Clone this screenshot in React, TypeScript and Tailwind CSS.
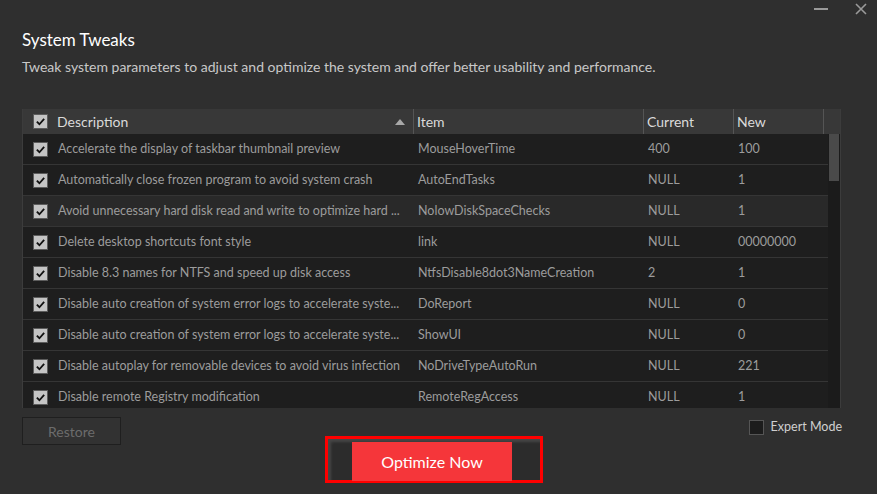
import React from "react";

const rows = [
  { desc: "Accelerate the display of taskbar thumbnail preview", item: "MouseHoverTime", cur: "400", next: "100" },
  { desc: "Automatically close frozen program to avoid system crash", item: "AutoEndTasks", cur: "NULL", next: "1" },
  { desc: "Avoid unnecessary hard disk read and write to optimize hard ...", item: "NolowDiskSpaceChecks", cur: "NULL", next: "1", active: true },
  { desc: "Delete desktop shortcuts font style", item: "link", cur: "NULL", next: "00000000" },
  { desc: "Disable 8.3 names for NTFS and speed up disk access", item: "NtfsDisable8dot3NameCreation", cur: "2", next: "1" },
  { desc: "Disable auto creation of system error logs to accelerate syste...", item: "DoReport", cur: "NULL", next: "0" },
  { desc: "Disable auto creation of system error logs to accelerate syste...", item: "ShowUI", cur: "NULL", next: "0" },
  { desc: "Disable autoplay for removable devices to avoid virus infection", item: "NoDriveTypeAutoRun", cur: "NULL", next: "221" },
  { desc: "Disable remote Registry modification", item: "RemoteRegAccess", cur: "NULL", next: "1" },
];

function Check() {
  return (
    <span className="flex h-[15px] w-[15px] shrink-0 items-center justify-center border border-[#5c5c5c] bg-[#c4c4c4]">
      <svg viewBox="0 0 12 12" className="h-[11px] w-[11px]">
        <path d="M2 6.2 L4.8 9 L10 3.2" fill="none" stroke="#111" strokeWidth="2" />
      </svg>
    </span>
  );
}

export default function App() {
  return (
    <div className="flex h-[494px] w-[877px] flex-col overflow-hidden bg-[#2f2f2f] font-['Lato',sans-serif]">
      {/* window controls */}
      <div className="flex h-[20px] items-start justify-end">
        <span className="mt-[8px] h-[2px] w-[14px] bg-[#9a9a9a]" />
        <svg viewBox="0 0 12 12" className="ml-[27px] mr-[10px] mt-[3px] h-[12px] w-[12px]">
          <path d="M1 1 L11 11 M11 1 L1 11" stroke="#9a9a9a" strokeWidth="1.6" />
        </svg>
      </div>

      <div className="px-[22px]">
        <h1 className="mt-[9px] text-[17px] leading-[22px] text-white">System Tweaks</h1>
        <p className="mt-[7px] text-[14px] leading-[18px] text-[#c8c8c8]">
          Tweak system parameters to adjust and optimize the system and offer better usability and performance.
        </p>

        {/* table */}
        <div className="mt-[33px] flex h-[299px] w-[819px] flex-col border-l border-r border-[#3c3c3c]">
          <div className="flex h-[25px] shrink-0 items-center bg-[#383838] text-[14px] text-[#dadada]">
            <div className="flex h-full w-[391px] items-center border-r border-[#555] pl-[10px]">
              <Check />
              <span className="ml-[9px]">Description</span>
              <svg viewBox="0 0 10 6" className="ml-auto mr-[8px] h-[6px] w-[10px]">
                <path d="M0 6 L5 0 L10 6 Z" fill="#a8a8a8" />
              </svg>
            </div>
            <div className="flex h-full w-[230px] items-center border-r border-[#555] pl-[3px]">Item</div>
            <div className="flex h-full w-[90px] items-center border-r border-[#555] pl-[3px]">Current</div>
            <div className="flex h-full w-[90px] items-center border-r border-[#555] pl-[3px]">New</div>
          </div>
          <div className="flex min-h-0 flex-1">
            <div className="flex-1 overflow-hidden bg-[#1e1e1e]">
              {rows.map((r, i) => (
                <div
                  key={i}
                  className={`flex h-[31px] items-center border-b border-[#353535] text-[12.5px] text-[#9c9c9c] ${
                    r.active ? "bg-[#292929]" : ""
                  }`}
                >
                  <div className="flex w-[391px] items-center overflow-hidden whitespace-nowrap pl-[10px]">
                    <Check />
                    <span className="ml-[10px]">{r.desc}</span>
                  </div>
                  <div className="w-[230px] overflow-hidden whitespace-nowrap pl-[4px]">{r.item}</div>
                  <div className="w-[90px] pl-[4px]">{r.cur}</div>
                  <div className="w-[90px] pl-[4px]">{r.next}</div>
                </div>
              ))}
            </div>
            <div className="w-[12px] shrink-0 bg-[#1b1b1b] pl-[1px] pr-[1px]">
              <div className="h-[47px] bg-[#4a4a4a]" />
            </div>
          </div>
        </div>

        {/* bottom controls */}
        <div className="flex items-start">
          <button className="mt-[9px] h-[28px] w-[99px] border border-[#1f1f1f] bg-[#323232] text-[14px] text-[#6c6c6c]">
            Restore
          </button>
          <div className="ml-[204px] mt-[28px] flex h-[47px] w-[218px] border-[3px] border-[#ff0000] bg-[#2c2c2c] pl-[24px] pt-[3px] shadow-[inset_3px_3px_3px_rgba(120,120,120,0.35)]">
            <button className="h-[39px] w-[160px] bg-[#f5363a] text-[16px] text-white">Optimize Now</button>
          </div>
          <label className="ml-auto mr-[13px] mt-[10px] flex items-center">
            <span className="h-[15px] w-[15px] border border-[#555] bg-[#1c1c1c]" />
            <span className="ml-[7px] text-[12.5px] text-[#cfcfcf]">Expert Mode</span>
          </label>
        </div>
      </div>
    </div>
  );
}
